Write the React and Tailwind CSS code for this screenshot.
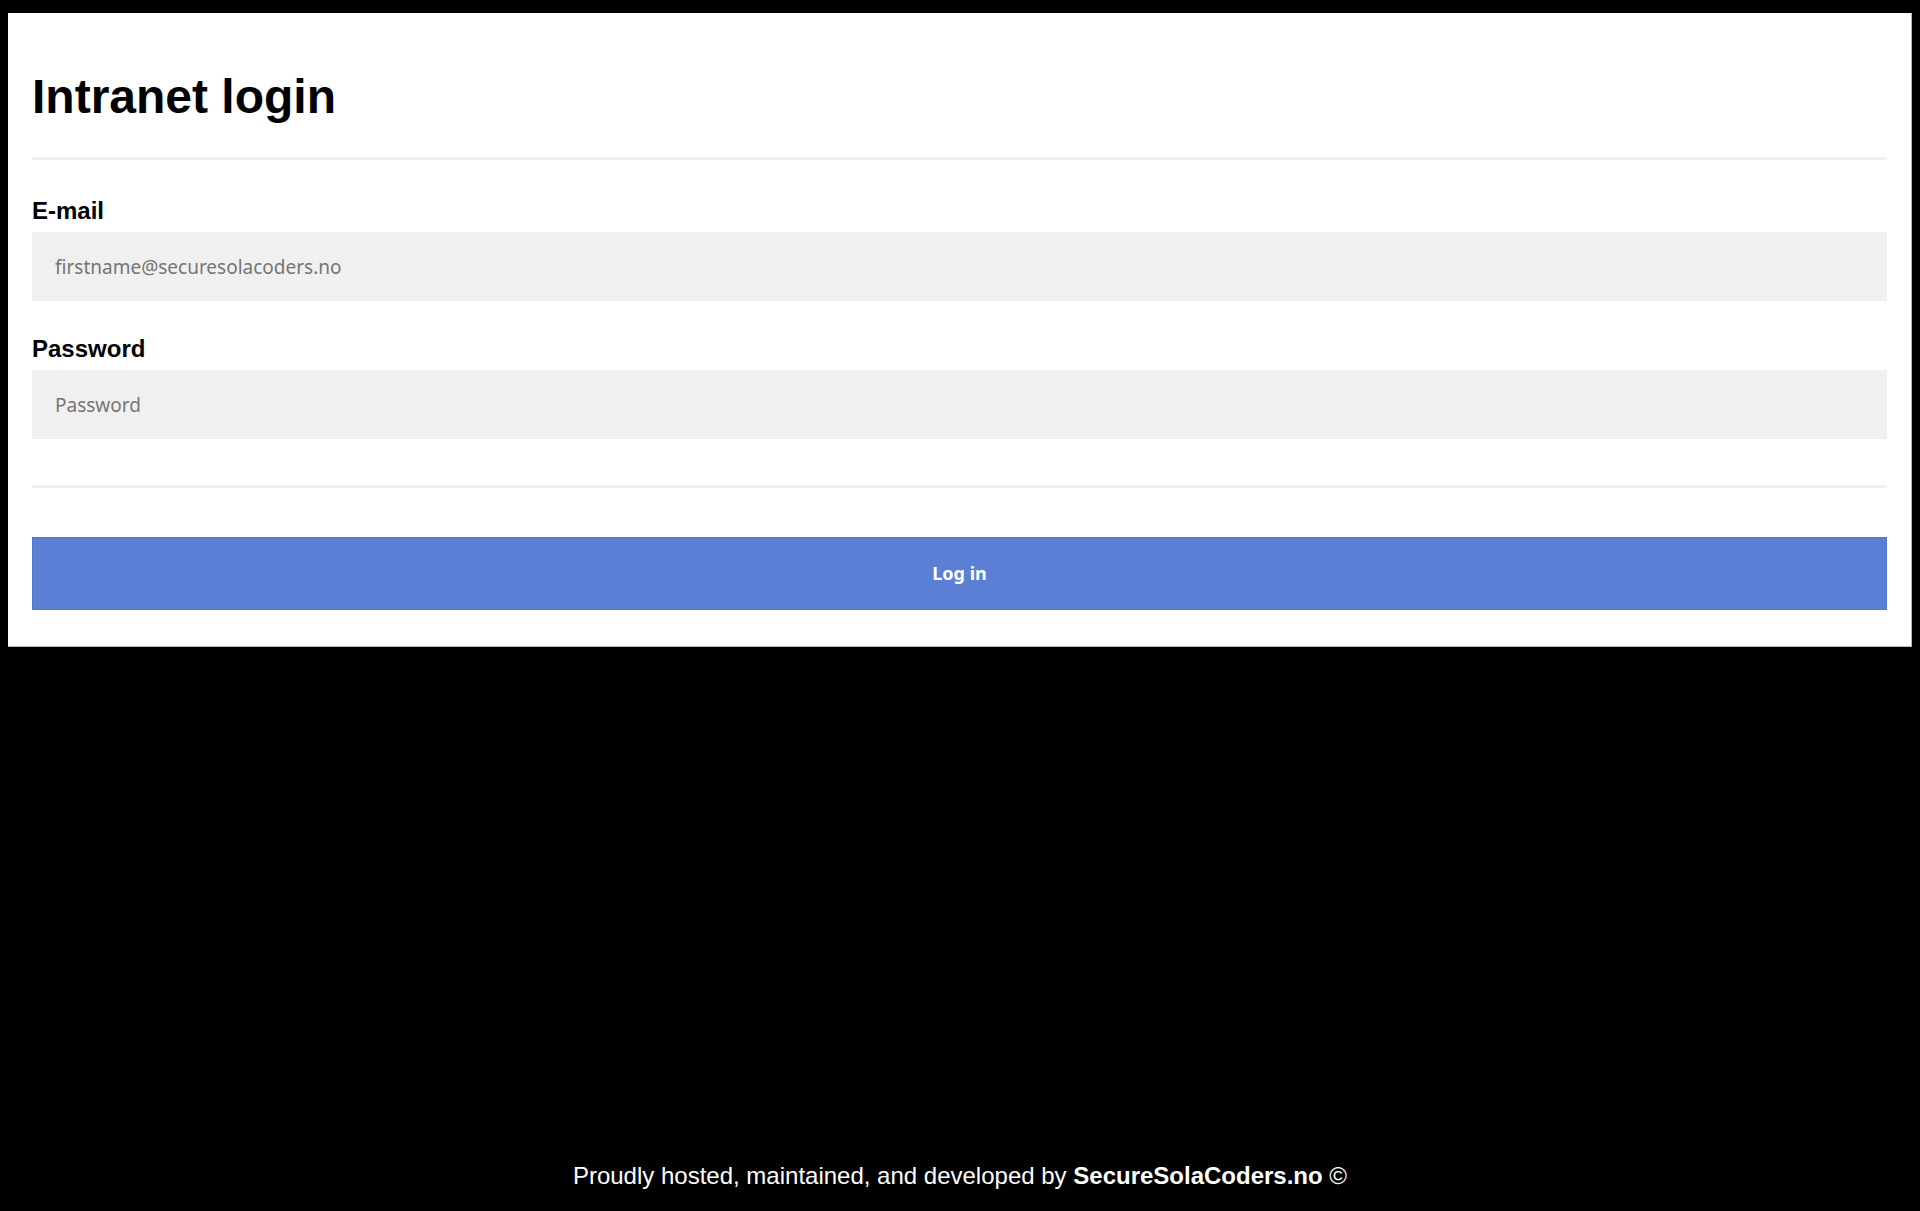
import { useState } from 'react';

const SANS = "font-['Liberation_Sans',Arial,sans-serif]";
const UI = "font-['Noto_Sans',sans-serif]";

export default function App() {
  const [form, setForm] = useState({ email: '', password: '' });

  const handleChange = ({ target }) => {
    const { name, value } = target;
    setForm((current) => ({ ...current, [name]: value }));
  };

  const handleSubmit = (event) => {
    event.preventDefault();
  };

  return (
    <div className={`flex min-h-screen flex-col bg-black ${SANS}`}>
      <main className="mx-[8px] mt-[13px] border-b border-r border-[#b5b5b5] bg-white px-[24px] pb-[36px] pt-[56px]">
        <h1 className="text-[48px] font-bold leading-[55px] text-black">
          Intranet login
        </h1>

        <div className="mt-[33px] h-[3px] bg-[#efefef]" />

        <form onSubmit={handleSubmit} noValidate className="flex flex-col">
          <label htmlFor="email" className="mt-[37px] text-[24px] font-bold leading-[28px] text-black">
            E-mail
          </label>
          <input
            id="email"
            type="email"
            name="email"
            value={form.email}
            onChange={handleChange}
            placeholder="firstname@securesolacoders.no"
            className={`mt-[7px] h-[69px] w-full bg-[#f0f0f0] pl-[23px] text-[19px] text-[#333] outline-none placeholder:text-[#757575] ${UI}`}
          />

          <label htmlFor="password" className="mt-[34px] text-[24px] font-bold leading-[28px] text-black">
            Password
          </label>
          <input
            id="password"
            type="password"
            name="password"
            value={form.password}
            onChange={handleChange}
            placeholder="Password"
            className={`mt-[7px] h-[69px] w-full bg-[#f0f0f0] pl-[23px] text-[19px] text-[#333] outline-none placeholder:text-[#757575] ${UI}`}
          />

          <div className="mt-[46px] h-[3px] bg-[#efefef]" />

          <button
            type="submit"
            className={`mt-[49px] h-[73px] w-full border border-[#5076cf] bg-[#5a7fd5] text-[18px] font-bold text-white ${UI}`}
          >
            Log in
          </button>
        </form>
      </main>

      <footer className="mt-auto pb-[21px] text-center text-[24px] leading-[28px] text-white">
        Proudly hosted, maintained, and developed by{' '}
        <span className="font-bold">SecureSolaCoders.no</span> ©
      </footer>
    </div>
  );
}
